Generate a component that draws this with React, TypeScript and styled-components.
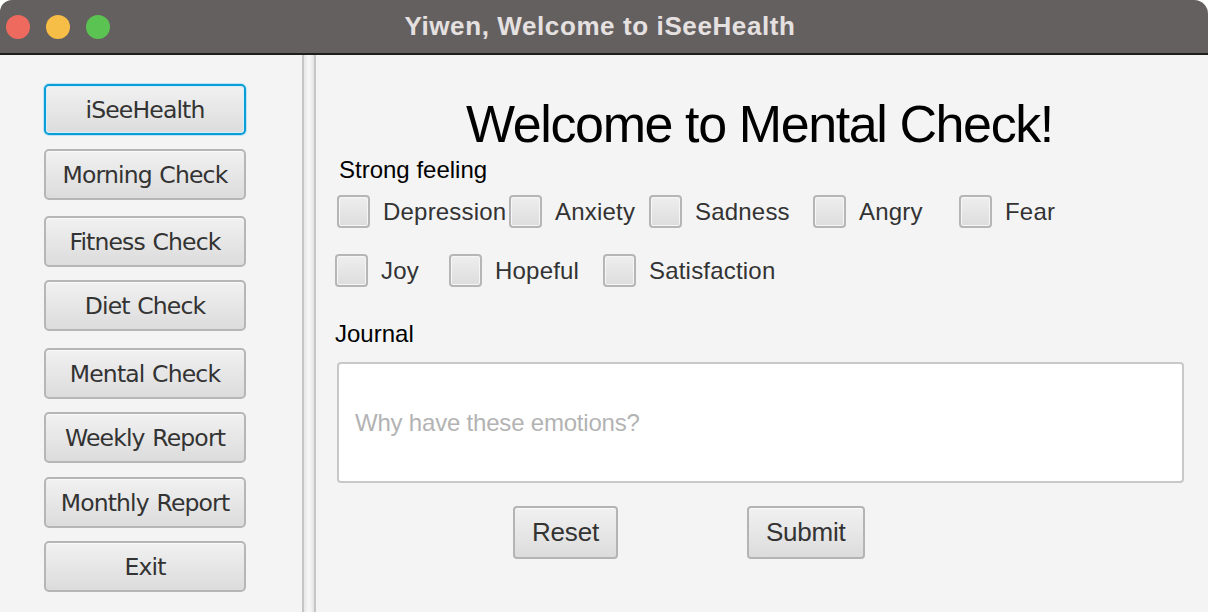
import React from "react";
import styled, { createGlobalStyle } from "styled-components";

const Global = createGlobalStyle`
  html, body { margin: 0; padding: 0; background: #ffffff; }
  body { width: 1208px; height: 612px; overflow: hidden; }
  * { box-sizing: border-box; }
`;

const Window = styled.div`
  width: 1208px;
  height: 612px;
  display: flex;
  flex-direction: column;
  border-radius: 12px 14px 0 0;
  overflow: hidden;
  background: #f4f4f4;
`;

const TitleBar = styled.div`
  height: 55px;
  flex: none;
  background: #656060;
  border-bottom: 2px solid #1e1c1c;
  display: flex;
  align-items: center;
  position: relative;
  padding-left: 6px;
`;

const Lights = styled.div`
  display: flex;
  gap: 16px;
`;

const Light = styled.span<{ $c: string }>`
  width: 24px;
  height: 24px;
  border-radius: 50%;
  background: ${(p) => p.$c};
`;

const Title = styled.div`
  position: absolute;
  left: 0;
  right: 0;
  top: 0;
  height: 53px;
  display: flex;
  align-items: center;
  justify-content: center;
  font-family: "Liberation Sans", Arial, sans-serif;
  font-weight: 700;
  font-size: 26px;
  letter-spacing: 0.6px;
  color: #e6e1e1;
  padding-right: 8px;
`;

const Body = styled.div`
  flex: 1;
  display: flex;
  min-height: 0;
`;

const Sidebar = styled.nav`
  width: 302px;
  flex: none;
  display: flex;
  flex-direction: column;
  align-items: flex-start;
  padding-left: 44px;
  padding-top: 29px;
`;

const NavButton = styled.button<{ $focused?: boolean; $mt: number }>`
  width: 202px;
  height: 51px;
  margin-top: ${(p) => p.$mt}px;
  border-radius: 5px;
  border: 2px solid ${(p) => (p.$focused ? "#0a9ed8" : "#b6b6b6")};
  box-shadow: ${(p) =>
    p.$focused
      ? "0 0 0 1px #bfe3f2, inset 0 0 0 1px #d8eef8"
      : "inset 0 1px 0 #fafafa"};
  background: linear-gradient(#f1f1f1, #dcdcdc);
  font-family: "DejaVu Sans", sans-serif;
  font-size: 23.5px;
  color: #333333;
  padding: 0;
  display: flex;
  align-items: center;
  justify-content: center;
  letter-spacing: -0.85px;
  word-spacing: 1px;
`;

const Divider = styled.div`
  width: 14px;
  flex: none;
  border-left: 2px solid #c6c6c6;
  border-right: 2px solid #c6c6c6;
  background: linear-gradient(90deg, #e6e6e6, #f7f7f7 45%, #f2f2f2 70%, #e2e2e2);
`;

const Main = styled.main`
  flex: 1;
  display: flex;
  flex-direction: column;
  padding-left: 19px;
  padding-right: 24px;
  font-family: "Liberation Sans", Arial, sans-serif;
`;

const Heading = styled.h1`
  margin: 39px 0 0;
  height: 60px;
  line-height: 60px;
  font-size: 52px;
  font-weight: 400;
  letter-spacing: -1.4px;
  color: #000;
  text-align: center;
`;

const SectionLabel = styled.div<{ $mt: number; $ml: number }>`
  margin-top: ${(p) => p.$mt}px;
  margin-left: ${(p) => p.$ml}px;
  height: 24px;
  line-height: 24px;
  font-size: 24px;
  color: #000;
`;

const OptionRow = styled.div<{ $mt: number; $ml: number }>`
  display: flex;
  align-items: center;
  margin-top: ${(p) => p.$mt}px;
  margin-left: ${(p) => p.$ml}px;
  height: 34px;
`;

const Option = styled.label<{ $w: number }>`
  width: ${(p) => p.$w}px;
  flex: none;
  display: flex;
  align-items: center;
  gap: 13px;
  font-size: 24px;
  color: #333333;
  white-space: nowrap;
`;

const OptionText = styled.span`
  padding-top: 2px;
  letter-spacing: 0.2px;
`;

const Box = styled.span`
  width: 33px;
  height: 33px;
  flex: none;
  border-radius: 4px;
  border: 2px solid #b6b6b6;
  box-shadow: inset 0 0 0 1px #f6f6f6;
  background: linear-gradient(#eeeeee, #dddddd);
`;

const Journal = styled.div`
  margin-top: 16px;
  margin-left: 2px;
  height: 121px;
  background: #ffffff;
  border: 2px solid #c8c8c8;
  border-radius: 4px;
  display: flex;
  align-items: center;
  padding-left: 16px;
  font-size: 24px;
  letter-spacing: -0.2px;
  color: #b3b3b3;
`;

const ActionRow = styled.div`
  display: flex;
  gap: 129px;
  margin-top: 23px;
  margin-left: 178px;
`;

const ActionButton = styled.button`
  height: 53px;
  padding: 0 17px;
  border-radius: 4px;
  border: 2px solid #b4b4b4;
  box-shadow: inset 0 1px 0 #fafafa;
  background: linear-gradient(#f1f1f1, #dcdcdc);
  font-family: "Liberation Sans", Arial, sans-serif;
  font-size: 26px;
  letter-spacing: -0.2px;
  color: #333333;
`;

const navItems = [
  { label: "iSeeHealth", mt: 0, focused: true },
  { label: "Morning Check", mt: 14 },
  { label: "Fitness Check", mt: 16 },
  { label: "Diet Check", mt: 13 },
  { label: "Mental Check", mt: 17 },
  { label: "Weekly Report", mt: 13 },
  { label: "Monthly Report", mt: 14 },
  { label: "Exit", mt: 13 },
];

const row1 = [
  { label: "Depression", w: 172 },
  { label: "Anxiety", w: 140 },
  { label: "Sadness", w: 164 },
  { label: "Angry", w: 146 },
  { label: "Fear", w: 120 },
];

const row2 = [
  { label: "Joy", w: 114 },
  { label: "Hopeful", w: 154 },
  { label: "Satisfaction", w: 200 },
];

export default function App() {
  return (
    <>
      <Global />
      <Window>
        <TitleBar>
          <Lights>
            <Light $c="#ef6a5e" />
            <Light $c="#f6be47" />
            <Light $c="#5bc352" />
          </Lights>
          <Title>Yiwen, Welcome to iSeeHealth</Title>
        </TitleBar>
        <Body>
          <Sidebar>
            {navItems.map((n) => (
              <NavButton key={n.label} $mt={n.mt} $focused={n.focused}>
                {n.label}
              </NavButton>
            ))}
          </Sidebar>
          <Divider />
          <Main>
            <Heading>Welcome to Mental Check!</Heading>
            <SectionLabel $mt={4} $ml={4}>Strong feeling</SectionLabel>
            <OptionRow $mt={12} $ml={2}>
              {row1.map((o) => (
                <Option key={o.label} $w={o.w}>
                  <Box />
                  <OptionText>{o.label}</OptionText>
                </Option>
              ))}
            </OptionRow>
            <OptionRow $mt={25} $ml={0}>
              {row2.map((o) => (
                <Option key={o.label} $w={o.w}>
                  <Box />
                  <OptionText>{o.label}</OptionText>
                </Option>
              ))}
            </OptionRow>
            <SectionLabel $mt={35} $ml={0}>Journal</SectionLabel>
            <Journal>Why have these emotions?</Journal>
            <ActionRow>
              <ActionButton>Reset</ActionButton>
              <ActionButton>Submit</ActionButton>
            </ActionRow>
          </Main>
        </Body>
      </Window>
    </>
  );
}
